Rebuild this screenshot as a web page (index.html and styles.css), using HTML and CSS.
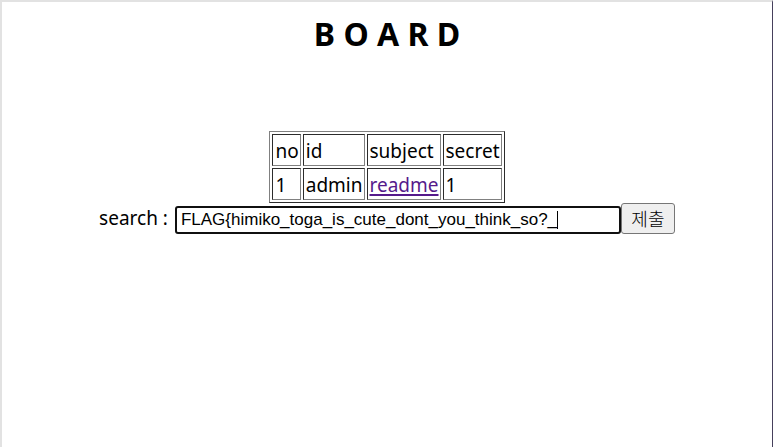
FILE: index.html
```
<!DOCTYPE html>
<html lang="ko">
<head>
<meta charset="utf-8">
<title>BOARD</title>
<link rel="stylesheet" href="styles.css">
</head>
<body>
<main class="page">
<h1 class="title">B O A R D</h1>
<table class="board">
<tr><td>no</td><td>id</td><td>subject</td><td>secret</td></tr>
<tr><td>1</td><td>admin</td><td><a href="#readme">readme</a></td><td>1</td></tr>
</table>
<form class="search">
<label for="search">search :</label>
<div class="box">
<input class="field" id="search" type="text" value="FLAG{himiko_toga_is_cute_dont_you_think_so?_">
<span class="caret"></span>
</div>
<button class="submit" type="submit">제출</button>
</form>
</main>
</body>
</html>
```
FILE: styles.css
```
* { box-sizing: border-box; }
body {
  margin: 0;
  background: #fff;
  color: #000;
  font: 19px/28px "Noto Sans", "Noto Sans CJK KR", sans-serif;
}
.page {
  min-height: 100vh;
  padding-top: 12px;
  border: solid #e2e2e2;
  border-width: 2px 1px 0 2px;
  border-right-color: #46405c;
}
.title {
  margin: 0 0 77px;
  font-size: 32px;
  line-height: 40px;
  font-weight: 700;
  text-align: center;
}
.board {
  margin: 0 auto;
  border: 1px solid;
  border-color: #808080 #2c2c2c #2c2c2c #808080;
  border-spacing: 2px;
}
.board td {
  height: 32px;
  padding: 2px 1px 0 2px;
  border: 1px solid;
  border-color: #2c2c2c #808080 #808080 #2c2c2c;
}
.board a {
  color: #551a8b;
  text-decoration-thickness: 2px;
  text-underline-offset: 2px;
}
.search {
  display: flex;
  justify-content: center;
  align-items: flex-end;
}
.search label { margin-right: 7px; line-height: 31px; }
.box {
  position: relative;
  flex: 0 1 446px;
  min-width: 0;
}
.field {
  display: block;
  width: 100%;
  height: 28px;
  padding: 0 4px;
  border: 2px solid #101010;
  border-radius: 3px;
  outline: 0;
  background: #fff;
  color: #000;
  font: 17px "Liberation Sans", sans-serif;
}
.caret {
  position: absolute;
  top: 5px;
  left: 382px;
  width: 1px;
  height: 18px;
  background: #000;
}
.submit {
  width: 54px;
  height: 31px;
  padding: 0 0 2px;
  border: 1px solid #767676;
  border-radius: 3px;
  background: #efefef;
  color: #000;
  font: 300 18px "Noto Sans CJK KR", sans-serif;
}
```
